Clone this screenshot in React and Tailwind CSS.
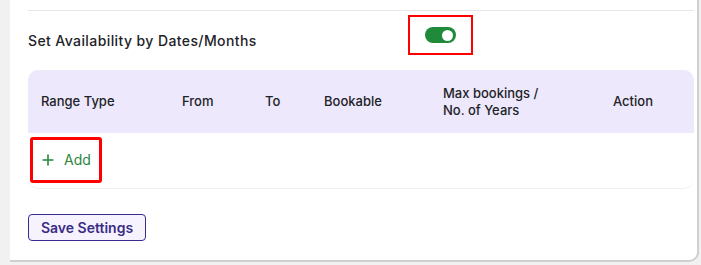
export default function App() {
  return (
    <div className="w-[701px] h-[265px] bg-[#f1f1f1] overflow-hidden" style={{ fontFamily: 'Inter, "Noto Sans", sans-serif' }}>
      <div className="ml-[10px] w-[689px] h-[262px] bg-white border-r-2 border-b-2 border-[#cfcfcf] rounded-br-[10px] pl-[18px] pr-[3px]">
        <div className="h-[11px] border-b border-[#e6e6e6]" />
        <div className="flex items-start mt-[4px]">
          <div className="w-[380px] mt-[16px] text-[14px] leading-[20px] font-medium text-[#1d2327] tracking-[0.4px]">
            Set Availability by Dates/Months
          </div>
          <div className="w-[65px] h-[40px] border-[2.5px] border-[#ff0000] flex items-center justify-center">
            <div className="w-[31px] h-[16px] rounded-full bg-[#1e8a3a] flex items-center justify-end pr-[3px]">
              <div className="w-[11px] h-[11px] rounded-full bg-white" />
            </div>
          </div>
        </div>
        <div className="mt-[15px] rounded-b-[10px] border-b border-[#f0f0f0]">
          <div className="h-[63px] bg-[#ede8fc] rounded-t-[10px] grid grid-cols-[141px_83px_59px_119px_170px_1fr] items-center pl-[13px] text-[13px] leading-[17px] font-medium text-[#1d2327]">
            <div>Range Type</div>
            <div>From</div>
            <div>To</div>
            <div>Bookable</div>
            <div>Max bookings /<br />No. of Years</div>
            <div>Action</div>
          </div>
          <div className="h-[55px] pt-[4px] pl-[2px]">
            <div className="w-[72px] h-[46px] border-[3px] border-[#ff0000] rounded-[3px] flex items-center pl-[9px] gap-[10px] text-[#2e8540]">
              <svg width="12" height="12" viewBox="0 0 12 12" fill="none" stroke="#238a3a" strokeWidth="1.6">
                <path d="M6 0.5V11.5M0.5 6H11.5" />
              </svg>
              <span className="text-[14px] leading-[20px]">Add</span>
            </div>
          </div>
        </div>
        <button className="mt-[25px] w-[118px] h-[27px] rounded-[4px] border border-[#3c2a8e] bg-[#f6f3ff] text-[14px] font-semibold text-[#3a2d85] flex items-center justify-center">
          Save Settings
        </button>
      </div>
    </div>
  );
}
